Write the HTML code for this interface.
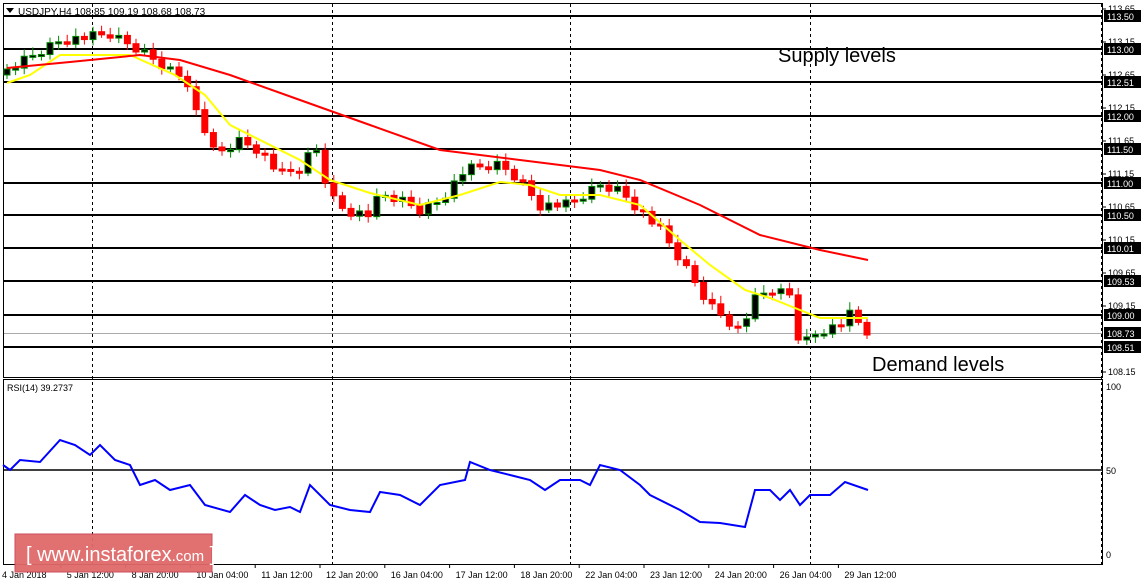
<!DOCTYPE html><html><head><meta charset="utf-8"><style>
body{margin:0;width:1143px;height:585px;background:#fff;overflow:hidden;font-family:"Liberation Sans",sans-serif}
svg{position:absolute;left:0;top:0}
</style></head><body>
<svg id="s" width="1143" height="585" xmlns="http://www.w3.org/2000/svg" font-family="Liberation Sans, sans-serif">
<rect x="3.5" y="3.5" width="1099" height="374" fill="none" stroke="#000"/>
<rect x="3.5" y="379.5" width="1099" height="185" fill="none" stroke="#000"/>
<g stroke="#000" stroke-dasharray="3,3"><line x1="92.5" y1="4" x2="92.5" y2="564"/><line x1="332.5" y1="4" x2="332.5" y2="564"/><line x1="570.5" y1="4" x2="570.5" y2="564"/><line x1="810.5" y1="4" x2="810.5" y2="564"/><line x1="1101.5" y1="4" x2="1101.5" y2="564"/></g>
<line x1="4" y1="333.5" x2="1102" y2="333.5" stroke="#aaa"/>
<g stroke="#000" stroke-width="2"><line x1="4" x2="1103" y1="16" y2="16"/><line x1="4" x2="1103" y1="49" y2="49"/><line x1="4" x2="1103" y1="82" y2="82"/><line x1="4" x2="1103" y1="116" y2="116"/><line x1="4" x2="1103" y1="149" y2="149"/><line x1="4" x2="1103" y1="183" y2="183"/><line x1="4" x2="1103" y1="215" y2="215"/><line x1="4" x2="1103" y1="248" y2="248"/><line x1="4" x2="1103" y1="281" y2="281"/><line x1="4" x2="1103" y1="315" y2="315"/><line x1="4" x2="1103" y1="347" y2="347"/><line x1="4" x2="1103" y1="470" y2="470" stroke-width="1.5"/></g>
<g id="c"></g>
<polyline fill="none" stroke="#ff0" stroke-width="2" points="7,83 30,75 60,55 130,55 175,75 205,95 230,125 260,140 300,160 330,180 370,193 420,205 460,195 500,182 530,185 560,195 600,195 640,205 680,240 710,265 745,290 770,298 800,310 820,318 868,318"/>
<polyline fill="none" stroke="#f00" stroke-width="2" points="7,68 70,62 140,55 180,60 230,75 300,100 370,125 440,150 520,160 600,170 640,180 700,205 760,235 820,250 868,260"/>
<polyline fill="none" stroke="#00f" stroke-width="2" points="3,465 10,470 20,460 40,462 60,440 75,445 90,455 100,445 115,460 130,465 140,485 155,480 170,490 190,485 205,505 230,512 245,495 260,505 275,510 290,507 300,512 310,485 330,505 350,510 370,512 380,492 400,495 420,505 440,485 465,480 470,462 490,470 510,475 530,480 545,490 560,480 580,480 590,485 600,465 620,470 640,485 650,495 680,510 700,522 720,523 745,527 755,490 770,490 780,500 790,490 800,505 810,495 830,495 845,482 868,490"/>
<g font-size="10" fill="#000"><path d="M6 8h8l-4 5z"/><text x="18" y="15">USDJPY,H4  108.85 109.19 108.68 108.73</text><text x="7" y="391" font-size="9">RSI(14) 39.2737</text></g>
<g font-size="9" id="ax"></g>
<text x="778" y="62" font-size="20">Supply levels</text>
<text x="872" y="371" font-size="20">Demand levels</text>
<rect x="15" y="534" width="197" height="38" fill="#e06a6a" stroke="#c45" opacity="0.95"/>
<text x="26" y="561" font-size="20" fill="#fff">[  www.instaforex<tspan font-size="15">.com</tspan> ]</text>
</svg>
<script>
(function(){
var ns="http://www.w3.org/2000/svg",ax=document.getElementById('ax'),cg=document.getElementById('c');
function el(p,n,a,t){var e=document.createElementNS(ns,n);for(var q in a)e.setAttribute(q,a[q]);if(t)e.textContent=t;p.appendChild(e);return e}
var ticks=[[113.65,9],[113.15,42],[112.65,75],[112.15,108],[111.65,141],[111.15,174],[110.65,207],[110.15,240],[109.65,273],[109.15,306],[108.15,372]];
ticks.forEach(function(t){el(ax,'line',{x1:1103,x2:1106,y1:t[1],y2:t[1],stroke:'#000'});el(ax,'text',{x:1108,y:t[1]+3},t[0].toFixed(2))});
var lab=[["113.50",16],["113.00",49],["112.51",82],["112.00",116],["111.50",149],["111.00",183],["110.50",215],["110.01",248],["109.53",281],["109.00",315],["108.73",333],["108.51",347]];
lab.forEach(function(t){el(ax,'rect',{x:1104,y:t[1]-6,width:37,height:12,fill:'#000'});el(ax,'text',{x:1107,y:t[1]+4,fill:'#fff'},t[0])});
el(ax,'text',{x:1106,y:390},'100');el(ax,'text',{x:1106,y:474},'50');el(ax,'text',{x:1106,y:558},'0');
var d=["4 Jan 2018","5 Jan 12:00","8 Jan 20:00","10 Jan 04:00","11 Jan 12:00","12 Jan 20:00","16 Jan 04:00","17 Jan 12:00","18 Jan 20:00","22 Jan 04:00","23 Jan 12:00","24 Jan 20:00","26 Jan 04:00","29 Jan 12:00"];
d.forEach(function(t,i){var x=2+i*64.8;el(ax,'text',{x:x,y:578},t);if(i)el(ax,'line',{x1:x-6,x2:x-6,y1:564,y2:568,stroke:'#000'})});
var k=[[7,70],[60,40],[110,35],[140,50],[180,75],[205,130],[215,155],[240,140],[260,150],[280,175],[300,170],[315,145],[330,195],[345,210],[370,215],[380,195],[400,200],[420,210],[440,200],[465,170],[500,165],[520,180],[540,205],[570,205],[600,185],[620,190],[640,210],[660,230],[690,275],[710,305],[740,330],[755,300],[770,290],[790,295],[800,345],[820,330],[840,325],[850,315],[868,333]];
function f(x){for(var i=1;i<k.length;i++)if(x<=k[i][0]){var a=k[i-1],b=k[i];return a[1]+(b[1]-a[1])*(x-a[0])/(b[0]-a[0])}return 333}
var prev=75,n=0;
for(var x=7;x<=868;x+=8.6){n++;var c=f(x)+((n*37)%11-5);var o=prev;var hi=Math.min(o,c),lo=Math.max(o,c);if(lo-hi<2)lo=hi+2;var bull=c<o;
el(cg,'line',{x1:x,x2:x,y1:hi-4-(n%5),y2:lo+3+(n%4),stroke:bull?'#080':'#f00'});
el(cg,'rect',{x:x-3,y:hi,width:6,height:lo-hi,fill:bull?'#000':'#f00',stroke:bull?'#080':'#f00'});prev=c}
})();
</script>
</body></html>
